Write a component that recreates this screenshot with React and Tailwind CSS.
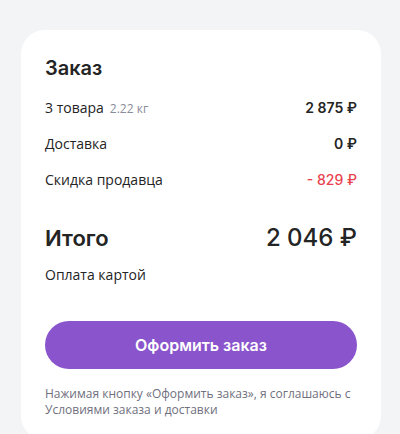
import React from "react";

const rows = [
  { label: "3 товара", note: "2.22 кг", value: "2 875 ₽" },
  { label: "Доставка", value: "0 ₽" },
  { label: "Скидка продавца", value: "- 829 ₽", red: true },
];

export default function App() {
  return (
    <div className="h-[434px] w-full overflow-hidden bg-[#f3f4f6] pt-[30px] pl-[21px] font-['Open_Sans',sans-serif] text-[#242424]">
      <div className="w-[360px] rounded-[24px] bg-white px-6 pt-6 pb-[22px]">
        <h2 className="font-['Inter',sans-serif] text-[20px] font-semibold leading-7">Заказ</h2>

        <div className="mt-4 flex flex-col gap-4 text-[14px]">
          {rows.map((r) => (
            <div key={r.label} className="flex h-5 items-center justify-between leading-5">
              <div className="flex items-baseline gap-1.5">
                <span>{r.label}</span>
                {r.note && <span className="text-[12px] text-[#8b8b99]">{r.note}</span>}
              </div>
              <span
                className={
                  r.red
                    ? "font-['Inter',sans-serif] font-medium text-[#e8424e]"
                    : "font-['Inter',sans-serif] font-semibold"
                }
              >
                {r.value}
              </span>
            </div>
          ))}
        </div>

        <div className="mt-8 flex h-8 items-center justify-between font-['Inter',sans-serif]">
          <span className="text-[22px] font-semibold">Итого</span>
          <span className="text-[24px] font-medium">2 046 ₽</span>
        </div>
        <p className="mt-[11px] text-[14px] leading-5">Оплата картой</p>

        <button className="mt-9 flex h-12 w-full items-center justify-center rounded-full bg-[#8a55cc] font-['Inter',sans-serif] text-[16px] font-semibold text-white">
          Оформить заказ
        </button>

        <p className="mt-[17px] pr-1 text-[12px] leading-4 text-[#6f6f7d]">
          Нажимая кнопку «Оформить заказ», я соглашаюсь с Условиями заказа и доставки
        </p>
      </div>
    </div>
  );
}
